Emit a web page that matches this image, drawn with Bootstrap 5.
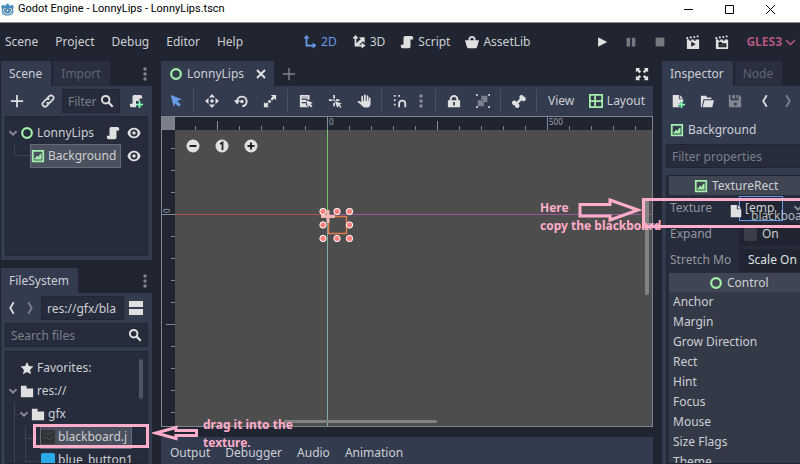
<!DOCTYPE html>
<html lang="en">
<head>
<meta charset="utf-8">
<meta name="viewport" content="width=device-width, initial-scale=1">
<title>Godot Engine - LonnyLips - LonnyLips.tscn</title>
<link href="https://cdn.jsdelivr.net/npm/bootstrap@5.3.0/dist/css/bootstrap.min.css" rel="stylesheet">
<style>
:root{--base:#202531;--panel:#333b4f;--inner:#262c3b;--txt:#cdcfd3;--dim:#7b808b;--pink:#ffaec9;--green:#a5efac}
html,body{height:100%}
body{background:var(--base);color:var(--txt);font:12px/16px "Noto Sans","Open Sans",sans-serif;overflow:hidden;position:relative}
svg.ic{width:14px;height:14px;flex:none;fill:#e0e0e0;display:block}
button{background:none;border:0;padding:0;color:inherit;display:inline-flex;align-items:center;justify-content:center;white-space:nowrap}
.titlebar{height:23px;background:#fff;color:#000;border-bottom:1px solid #8b8d92;padding:0 24px 4px 1px;font-size:11px;font-family:Roboto,"Open Sans",sans-serif}
.titlebar .wins{gap:30px}
.menubar{height:38px;padding:0 4px 0 5px}
.menus{gap:17px}.modes{gap:15px;margin-left:60px}.modes button{gap:4px}
.slot{width:29px;height:28px}
.slim{width:24px}
.blue{color:#699ce8}.blue svg.ic,svg.ic.blue{fill:#699ce8}
.pinkish{color:#b1567f;font-weight:700;gap:3px;margin-left:10px}
.workspace{gap:9px;padding-left:1px;min-height:0}
.dock-left{width:151px;min-height:0}.dock-right{width:138px;overflow:hidden;min-height:0}
.tabs{height:25px;flex:none}
.tabs button{height:25px;padding:0 9px 0 8px;background:var(--panel)}
.tabs button.off{background:#292f3f;color:#5f6571;margin-left:2px}
.tab-close{margin-left:12px}
.pane{background:var(--panel)}
.fill{flex:1 1 0;min-height:0}
.bar{height:30px}
.sunk{background:var(--inner);border:1px solid #202634}
.field{background:var(--inner);border:1px solid #202634;color:var(--txt);height:24px;padding:0 5px;width:100%;min-width:0;outline:0}
.field::placeholder{color:var(--dim);opacity:1}
.with-icon{position:relative}
.with-icon svg{position:absolute;right:6px;top:5px}
.scene-tree{height:140px;padding-top:4px}
.row-item{height:23px;display:flex;align-items:center;white-space:nowrap;gap:3px}
.sel{background:#4b505e;border:1px solid #646a77;height:24px;gap:3px}
.lvl1{padding-left:14px}.lvl2{padding-left:11px}.lvl3{padding-left:34px}.lvl4{padding-left:35px}
.eyes{margin-right:6px}
.files{padding-top:4px;overflow:hidden;position:relative}
.files .thumb{position:absolute;right:4px;top:7px;width:4px;height:40px;border-radius:2px;background:#4e5463}
.chev{width:14px;height:14px;margin-right:-3px}
.guide{position:absolute;left:0;top:0;fill:none;stroke:#3c4250}
.sep{width:1px;height:24px;background:#4a5164;margin:0 3px}
.viewport{border:1px solid #7f8493;height:311px;background:#4d4d4d;position:relative;overflow:hidden}
.viewport>svg{position:absolute;left:0;top:0;width:100%;height:100%}
.zoomers{position:absolute;left:24px;top:22px;gap:15px}
.bottom{height:27px;gap:15px;padding:4px 9px 0}
.search-props{width:160px;margin-bottom:7px;flex:none}
.insp{padding-left:2px;width:170px;overflow:hidden}
.node-name{height:28px;flex:none}
.head{background:#404553;height:19px}
.head.type{padding-left:25px}.head.ctrl{padding-left:40px}
.prop{height:26px;color:#9497a0}
.prop .name{width:70px;padding-left:1px;overflow:hidden;white-space:nowrap;flex:none}
.prop .name.short{width:64px;margin-right:6px}
.value{background:var(--base);height:23px;flex:1;color:var(--txt)}
.value select{appearance:none;background:none;border:0;color:#dfe0e2;height:23px;padding:0 9px;width:100%}
.value input{appearance:none;width:13px;height:13px;background:#3a3f49;border-radius:2px;margin:0 5px 0 5px}
.slotval{width:44px;height:25px;border:1px solid #699ce8;background:var(--base);justify-content:flex-start;padding-left:5px;margin-right:8px;color:var(--txt)}
.sections{background:#343947}
.sections button{display:flex;height:20px;padding-left:4px}
.note{position:absolute;color:var(--pink);font-weight:700;line-height:18px;white-space:nowrap}
.frame{position:absolute;border:3px solid var(--pink);pointer-events:none}
.arrow{position:absolute;fill:none;stroke:var(--pink);stroke-width:3}
.ghost{position:absolute;left:729px;top:204px;gap:8px;color:#b5b7bb}
.drag-src{left:33px;top:424px;width:116px;height:24px}
.drop-dst{left:642px;top:198px;right:-12px;height:30px}
.arrow-src{left:152px;top:424px}.arrow-dst{left:576px;top:196px}
.note-dst{left:540px;top:199px}.note-src{left:203px;top:416px}
</style>
<script src="https://cdn.jsdelivr.net/npm/bootstrap@5.3.0/dist/js/bootstrap.bundle.min.js"></script>
</head>
<body class="d-flex flex-column">
<svg width="0" height="0" class="position-absolute" aria-hidden="true"><defs>
<symbol id="dots" viewBox="0 0 16 16"><circle cx="8" cy="2.2" r="2"/><circle cx="8" cy="8" r="2"/><circle cx="8" cy="13.8" r="2"/></symbol>
<symbol id="script" viewBox="0 0 16 16"><path d="M6 1C4.900 1 4 1.900 4 3v8H1v2c0 1.100.9 2 2 2h7c1.100 0 2-.9 2-2V5h3V3c0-1.100-.9-2-2-2z"/></symbol>
<symbol id="plus" viewBox="0 0 16 16"><path d="M7 1h2v6h6v2H9v6H7V9H1V7h6z"/></symbol>
<symbol id="eye" viewBox="0 0 16 16"><path fill-rule="evenodd" d="M8 2C4.500 2 1.500 4.300 0.500 8c1 3.700 4 6 7.500 6s6.500-2.300 7.500-6C14.500 4.300 11.500 2 8 2zm0 2a4 4 0 110 8 4 4 0 010-8zm0 2a2 2 0 100 4 2 2 0 000-4z"/></symbol>
<symbol id="ring" viewBox="0 0 16 16"><circle cx="8" cy="8" r="5.500" fill="none" stroke="#a5efac" stroke-width="2.500"/></symbol>
<symbol id="tex" viewBox="0 0 16 16"><path fill="#a5efac" fill-rule="evenodd" d="M1 1h14v14H1zm2 2v10h10V3z"/><path fill="#a5efac" d="M4 12v-2h2V8h2v1h1V7h1V6h1V5h1v7z"/></symbol>
<symbol id="chev" viewBox="0 0 16 16"><path d="M4 6l4 4 4-4" fill="none" stroke="#858a94" stroke-width="2.200"/></symbol>
<symbol id="left" viewBox="0 0 16 16"><path d="M10 1.500L6 8l4 6.500" fill="none" stroke="#e0e0e0" stroke-width="2"/></symbol>
<symbol id="right" viewBox="0 0 16 16"><path d="M6 1.500L10 8l-4 6.500" fill="none" stroke="#7d828e" stroke-width="2"/></symbol>
<symbol id="search" viewBox="0 0 16 16"><circle cx="6.500" cy="6.500" r="4.300" fill="none" stroke="#e0e0e0" stroke-width="2.200"/><path d="M9.500 9.500L14.500 14.500" stroke="#e0e0e0" stroke-width="2.600"/></symbol>
<symbol id="folder" viewBox="0 0 16 16"><path d="M1 2h6.500v3H15v10H1z"/></symbol>
<symbol id="clap" viewBox="0 0 16 16"><path d="M0 3l2-1 1 2-2 1zM4 2l2-.6 1 2-2 .6zM8 1.500l2-.5 1 2-2 .5zM12 .8l2-.5.6 2-2 .6zM1 5h3v1.500h2V5h3v1.500h2V5h4v11H1z"/></symbol>
</defs></svg>

<header class="titlebar d-flex align-items-center flex-shrink-0">
<svg width="13" height="13" viewBox="0 0 16 16" class="me-1" aria-hidden="true"><path fill="#478cbf" d="M1 6l-.8-2L2.500 2l2 1.500L6 3l.5-2h3L10 3l1.500.5 2-1.500 2.300 2L15 6v6c0 2-3.500 3.500-7 3.500S1 14 1 12z"/><circle cx="4.500" cy="8.500" r="2" fill="#fff"/><circle cx="11.500" cy="8.500" r="2" fill="#fff"/><circle cx="4.800" cy="8.600" r="1.100" fill="#414042"/><circle cx="11.200" cy="8.600" r="1.100" fill="#414042"/><path stroke="#fff" d="M8 8v2.500M2 12l3 .5.500 1h5l.5-1 3-.5" fill="none"/></svg>
<span>Godot Engine - LonnyLips - LonnyLips.tscn</span>
<div class="wins d-flex ms-auto">
<button aria-label="Minimize"><svg width="11" height="11"><path d="M1 5.500h9" stroke="#000"/></svg></button>
<button aria-label="Maximize"><svg width="11" height="11"><path d="M1.500 1.500h8v8h-8z" fill="none" stroke="#000"/></svg></button>
<button aria-label="Close"><svg width="11" height="11"><path d="M1 1l9 9M10 1l-9 9" stroke="#000" fill="none"/></svg></button>
</div>
</header>

<nav class="menubar d-flex align-items-center flex-shrink-0">
<div class="menus d-flex"><button>Scene</button><button>Project</button><button>Debug</button><button>Editor</button><button>Help</button></div>
<div class="modes d-flex">
<button class="blue"><svg class="ic" viewBox="0 0 16 16"><path d="M4 0l3.500 4H5v7h6V8.500l4.500 3.500-4.500 3.500V13H3V4H.5z"/></svg>2D</button>
<button><svg class="ic" viewBox="0 0 16 16"><path d="M4 0l3.500 4H5v5.500l5-5L8 2.500h6.500V9l-2-2-4.500 4h3V8.500l4.500 3.500-4.500 3.500V13H3V4H.5z"/></svg>3D</button>
<button><svg class="ic"><use href="#script"/></svg>Script</button>
<button><svg class="ic" viewBox="0 0 16 16"><path fill-rule="evenodd" d="M8 1a4 4 0 00-4 4v1H0l2 7c.4 1.300 1 2 2 2h8c1 0 1.600-.7 2-2l2-7h-4V5a4 4 0 00-4-4zm0 2a2 2 0 012 2v1H6V5a2 2 0 012-2z"/></svg>AssetLib</button>
</div>
<div class="d-flex align-items-center ms-auto">
<button class="slot" aria-label="Play"><svg class="ic" viewBox="0 0 16 16"><path d="M3.500 2.500v11L14 8z"/></svg></button>
<button class="slot" aria-label="Pause"><svg class="ic" viewBox="0 0 16 16" opacity=".45"><path d="M3 3h4v10H3zM9 3h4v10H9z"/></svg></button>
<button class="slot me-1" aria-label="Stop"><svg class="ic" viewBox="0 0 16 16" opacity=".45"><path d="M3 3h10v10H3z"/></svg></button>
<button class="slot" aria-label="Play scene"><svg class="ic" viewBox="0 0 16 16"><use href="#clap"/><path fill="#202531" d="M6 7.500v6l5-3z"/></svg></button>
<button class="slot" aria-label="Play custom scene"><svg class="ic" viewBox="0 0 16 16"><use href="#clap"/><path fill="#202531" d="M4 8h4v1.500h5V14H4z"/><path fill="#e0e0e0" d="M6 11h5v1.500H6z" opacity=".2"/></svg></button>
<button class="pinkish">GLES3<svg width="11" height="11" viewBox="0 0 11 11"><path d="M1 3l4.500 4.500L10 3" fill="none" stroke="#b1567f" stroke-width="1.600"/></svg></button>
</div>
</nav>

<main class="workspace d-flex flex-grow-1">
<aside class="dock-left d-flex flex-column flex-shrink-0">
<div class="tabs d-flex align-items-center"><button>Scene</button><button class="off">Import</button><button class="ms-auto bg-transparent p-0" aria-label="Scene dock menu"><svg class="ic" opacity=".5"><use href="#dots"/></svg></button></div>
<section class="pane px-1 pb-1 mb-2">
<div class="bar d-flex align-items-center">
<button class="slot slim flex-shrink-0" aria-label="Add node"><svg class="ic"><use href="#plus"/></svg></button>
<button class="slot flex-shrink-0 ms-1" aria-label="Instance scene"><svg class="ic" viewBox="0 0 16 16"><g fill="none" stroke="#e0e0e0" stroke-width="1.900"><path d="M7 5l2.500-2.500a2.800 2.800 0 014 4L10.500 9.500a2.800 2.800 0 01-4 0M9 11l-2.500 2.500a2.800 2.800 0 01-4-4L5.500 6.500a2.800 2.800 0 014 0"/></g></svg></button>
<label class="with-icon flex-grow-1"><input class="field" placeholder="Filter" aria-label="Filter nodes"><svg class="ic"><use href="#search"/></svg></label>
<button class="slot slim flex-shrink-0 ms-1" aria-label="Attach script"><svg class="ic" viewBox="0 0 16 16"><use href="#script"/><path d="M8 8h8v8H8z" fill="#333b4f"/><path d="M11 8h2v3h3v2h-3v3h-2v-3H8v-2h3z" fill="#84ffb1"/></svg></button>
</div>
<div class="scene-tree sunk position-relative">
<svg class="guide" width="30" height="46"><path d="M8.500 28v10.500H25"/></svg>
<div class="row-item"><svg class="chev"><use href="#chev"/></svg><svg class="ic"><use href="#ring"/></svg><span class="flex-grow-1">LonnyLips</span><svg class="ic me-1"><use href="#script"/></svg><svg class="ic eyes"><use href="#eye"/></svg></div>
<div class="row-item position-relative"><div class="sel d-flex align-items-center ms-4 pe-1"><svg class="ic"><use href="#tex"/></svg><span>Background</span></div><svg class="ic ms-auto eyes"><use href="#eye"/></svg></div>
</div>
</section>
<div class="tabs d-flex align-items-center"><button>FileSystem</button><button class="ms-auto bg-transparent p-0" aria-label="FileSystem dock menu"><svg class="ic" opacity=".5"><use href="#dots"/></svg></button></div>
<section class="pane px-1 fill d-flex flex-column">
<div class="bar d-flex align-items-center flex-shrink-0">
<button aria-label="Back"><svg class="ic"><use href="#left"/></svg></button>
<button class="mx-1" aria-label="Forward"><svg class="ic"><use href="#right"/></svg></button>
<input class="field flex-grow-1" value="res://gfx/bla" aria-label="Path">
<button class="slot slim flex-shrink-0" aria-label="Split mode"><svg class="ic" viewBox="0 0 14 14"><path d="M0 0h14v6H0zM0 8h14v6H0z"/></svg></button>
</div>
<label class="with-icon mb-1"><input class="field" placeholder="Search files" aria-label="Search files"><svg class="ic"><use href="#search"/></svg></label>
<div class="files sunk fill">
<svg class="guide" width="40" height="115"><path d="M8.500 50v65M8.500 62.500H14M19.500 74v40M19.500 86.500H32M19.500 109.500H32"/></svg>
<div class="row-item lvl1"><svg class="ic" viewBox="0 0 16 16"><path d="M8 1l2.200 4.800 5.200.6-3.900 3.500 1.100 5.100L8 12.500 3.400 15l1.100-5.100L.6 6.400l5.200-.6z"/></svg><span>Favorites:</span></div>
<div class="row-item"><svg class="chev"><use href="#chev"/></svg><svg class="ic"><use href="#folder"/></svg><span>res://</span></div>
<div class="row-item lvl2"><svg class="chev"><use href="#chev"/></svg><svg class="ic"><use href="#folder"/></svg><span>gfx</span></div>
<div class="row-item lvl3"><div class="sel d-flex align-items-center pe-1"><svg class="ic" viewBox="0 0 14 14"><path d="M0 0h14v14H0z" fill="#303236"/><path d="M1 9l4-2 3 3 5-4M3 3l4 1 5-2" fill="none" stroke="#45484c"/></svg><span>blackboard.j</span></div></div>
<div class="row-item lvl4"><svg class="ic" viewBox="0 0 14 14"><rect width="14" height="14" rx="2" fill="#29abe8"/></svg><span>blue_button1</span></div>
<div class="thumb"></div>
</div>
</section>
</aside>

<section class="d-flex flex-column fill">
<div class="tabs d-flex align-items-center">
<button class="pe-2"><svg class="ic me-1"><use href="#ring"/></svg>LonnyLips<svg class="tab-close" width="10" height="10"><path d="M1 1l8 8M9 1l-8 8" stroke="#e0e0e0" stroke-width="2"/></svg></button>
<button class="bg-transparent" aria-label="New tab"><svg class="ic" viewBox="0 0 16 16" opacity=".5"><path d="M7.200 1h1.600v6.200H15v1.600H8.800V15H7.200V8.800H1V7.200h6.200z"/></svg></button>
<button class="ms-auto bg-transparent p-0 me-1" aria-label="Distraction free"><svg class="ic" viewBox="0 0 16 16"><path d="M1 1h5L4.500 2.500 7 5 5 7 2.500 4.500 1 6zM15 1v5l-1.500-1.500L11 7 9 5l2.500-2.500L10 1zM1 15v-5l1.500 1.500L5 9l2 2-2.500 2.500L6 15zM15 15h-5l1.500-1.500L9 11l2-2 2.500 2.500L15 10z"/></svg></button>
</div>
<div class="pane bar d-flex align-items-center flex-shrink-0">
<button class="slot" aria-label="Select"><svg class="ic blue" viewBox="0 0 16 16"><path d="M2 1l12.500 5-5 2 4 4-2.500 2.500-4-4-1.500 4.500z"/></svg></button><i class="sep"></i>
<button class="slot" aria-label="Move"><svg class="ic" viewBox="0 0 16 16"><path d="M8 0l3.500 4h-7zM8 16l3.500-4h-7zM0 8l4-3.500v7zM16 8l-4-3.500v7z"/><circle cx="8" cy="8" r="2"/></svg></button>
<button class="slot" aria-label="Rotate"><svg class="ic" viewBox="0 0 16 16"><path d="M3.500 9a5.500 5.500 0 116 5" fill="none" stroke="#e0e0e0" stroke-width="2.200"/><path d="M0 7h7l-3.500 5z"/><circle cx="9" cy="8.500" r="2"/></svg></button>
<button class="slot" aria-label="Scale"><svg class="ic" viewBox="0 0 16 16"><path d="M9 1h6v6l-2-2-2.500 2.500-2-2L11 3zM7 15H1V9l2 2 1.500-1.500 2 2L5 13z"/><circle cx="7.500" cy="8.500" r="1.700"/></svg></button><i class="sep"></i>
<button class="slot" aria-label="List selection"><svg class="ic" viewBox="0 0 16 16"><path fill-rule="evenodd" d="M1 1h11v6l-2-1H9V5H3v1.500h5V9H3v1.500h5V13h1l1 2H1zM3 3v.8h7V3z"/><path d="M8 7l8 3-3 1.300 2.500 2.500-1.500 1.500-2.500-2.500L10.500 16z"/></svg></button>
<button class="slot" aria-label="Pivot"><svg class="ic" viewBox="0 0 16 16"><path d="M6 1h2v4H6zM1 6h4v2H1zM9 6h4v2H9zM6 10h2v4H6z"/><circle cx="7" cy="7" r="1"/><path d="M8 8l8 3-3 1.300 2.500 2.500-1.200 1.200-2.500-2.500L10.500 16z"/></svg></button>
<button class="slot" aria-label="Pan"><svg class="ic" viewBox="0 0 16 16"><path d="M5 3a1 1 0 012 0v5h1V1.500a1 1 0 012 0V8h1V2.500a1 1 0 012 0V8h.5V5a1 1 0 012 0v6c0 3-2 4.500-5 4.500S6 14 5 12.500L1 9.500C0 8.500 1.500 7.500 2.500 8L5 9.500z"/></svg></button><i class="sep"></i>
<button class="slot" aria-label="Snap"><svg class="ic" viewBox="0 0 16 16"><path d="M1 1h2v2H1zM1 6h2v2H1zM1 11h2v2H1zM6 1h2v2H6z"/><path d="M7 15v-4a3.500 3.500 0 017 0v4" fill="none" stroke="#e0e0e0" stroke-width="2"/></svg></button>
<button aria-label="Snap options"><svg class="ic me-1" opacity=".5"><use href="#dots"/></svg></button><i class="sep"></i>
<button class="slot" aria-label="Lock"><svg class="ic" viewBox="0 0 16 16"><path fill-rule="evenodd" d="M8 1a5 5 0 00-5 5v1H1v8h14V7h-2V6a5 5 0 00-5-5zm0 2.300A2.700 2.700 0 0110.700 6v1H5.300V6A2.700 2.700 0 018 3.300zM7 9h2v4H7z"/></svg></button>
<button class="slot" aria-label="Group"><svg class="ic" viewBox="0 0 16 16"><path fill="#7c818d" d="M6 2h7v7h-4v5H2V7h4z"/><path d="M7 7h2v2H7z" fill="#333b4f"/><path d="M0 0h2v2H0zM14 0h2v2h-2zM0 14h2v2H0zM14 14h2v2h-2zM8 8h1v1H8z"/></svg></button><i class="sep"></i>
<button class="slot" aria-label="Skeleton"><svg class="ic" viewBox="0 0 16 16"><path d="M10.500 1A2.500 2.500 0 009 5L5 9a2.600 2.600 0 10-1.500 3.500A2.600 2.600 0 107 11l4-4a2.600 2.600 0 102-4A2.500 2.500 0 0010.500 1z"/></svg></button><i class="sep"></i>
<button class="px-2">View</button>
<button class="ms-auto me-1 pe-1"><svg class="ic me-1" viewBox="0 0 16 16"><path fill="#a5efac" fill-rule="evenodd" d="M0 0h16v16H0zm2 2v5h4V2zm6 0v5h6V2zM2 9v5h4V9zm6 0v5h6V9z"/></svg>Layout</button>
</div>
<div class="viewport flex-shrink-0">
<svg aria-label="2D canvas">
<defs>
<pattern id="tx" x="11" y="0" width="22" height="13" patternUnits="userSpaceOnUse"><path d="M.5 9v4" stroke="#7d8290"/></pattern>
<pattern id="ty" x="0" y="9" width="13" height="22" patternUnits="userSpaceOnUse"><path d="M9 .5h4" stroke="#7d8290"/></pattern>
</defs>
<rect width="100%" height="13" fill="#202531"/><rect width="13" height="100%" fill="#202531"/>
<rect width="100%" height="13" fill="url(#tx)"/><rect width="13" height="100%" fill="url(#ty)"/>
<rect width="13" height="13" fill="#7b7f8c"/>
<path d="M55.500 4v9M275.500 4v9M165.500 0v13M385.500 0v13M0 97.500h13M4 207.500h9" stroke="#858a98"/>
<g fill="#a5a8b0" font-size="8"><text x="167" y="8">0</text><text x="387" y="8">500</text><text transform="translate(8 96) rotate(-90)">0</text></g>
<path d="M13 97.500h152" stroke="#b05252"/><path d="M166 97.500h2000" stroke="#96589c"/>
<path d="M165.500 13v84" stroke="#78c070"/><path d="M165.500 98v2000" stroke="#7fb0a8"/>
<rect x="166.500" y="99.500" width="18" height="17" fill="none" stroke="#df7c50" stroke-width="1.500"/>
<path d="M166 93v13M159 99.500h14" stroke="#efb9b3" stroke-width="3"/>
<g fill="#ff7f7f" stroke="#fff" stroke-width="1"><circle cx="161" cy="94.500" r="3.200"/><circle cx="175" cy="94.500" r="3.200"/><circle cx="187.500" cy="94.500" r="3.200"/><circle cx="161" cy="108" r="3.200"/><circle cx="187.500" cy="108" r="3.200"/><circle cx="161" cy="121.500" r="3.200"/><circle cx="175" cy="121.500" r="3.200"/><circle cx="187.500" cy="121.500" r="3.200"/></g>
<rect x="122" y="303" width="153" height="3" rx="1.500" fill="#838383"/>
<rect x="483" y="82" width="4" height="96" rx="2" fill="#838383"/>
</svg>
<div class="zoomers d-flex">
<button aria-label="Zoom out"><svg class="ic" viewBox="0 0 14 14"><circle cx="7" cy="7" r="6.500"/><path d="M3.500 7h7" stroke="#222" stroke-width="2"/></svg></button>
<button aria-label="Zoom reset"><svg class="ic" viewBox="0 0 14 14"><circle cx="7" cy="7" r="6.500"/><path d="M5 5l2.500-1.500V11" fill="none" stroke="#222" stroke-width="1.800"/></svg></button>
<button aria-label="Zoom in"><svg class="ic" viewBox="0 0 14 14"><circle cx="7" cy="7" r="6.500"/><path d="M3.500 7h7M7 3.500v7" stroke="#222" stroke-width="2"/></svg></button>
</div>
</div>
<div class="pane bottom d-flex align-items-center mt-auto"><button>Output</button><button>Debugger</button><button>Audio</button><button>Animation</button></div>
</section>

<aside class="dock-right d-flex flex-column flex-shrink-0">
<div class="tabs d-flex"><button>Inspector</button><button class="off">Node</button></div>
<section class="pane fill d-flex flex-column ps-1">
<div class="bar d-flex align-items-center flex-shrink-0">
<button class="slot slim" aria-label="New resource"><svg class="ic" viewBox="0 0 16 16"><path d="M2 1h7v5h5v3h-3v2H8v3h2v1H2zM10 1l4 4h-4z"/><path d="M11 8h2v3h3v2h-3v3h-2v-3H8v-2h3z" fill="#84ffb1"/></svg></button>
<button class="slot ms-1" aria-label="Open"><svg class="ic" viewBox="0 0 16 16"><path d="M1 2h6l1 2h5v2H4L2.500 13 2 15H1z"/><path d="M5 7h11l-2 8H3z"/></svg></button>
<button class="slot me-1" aria-label="Save"><svg class="ic" viewBox="0 0 16 16" opacity=".45"><path fill-rule="evenodd" d="M1 1h2v6h9V1h1l2 2v12H1zm6 9v3h3v-3zM5 1h3v4H5zM9.500 1H11v4H9.500z"/></svg></button>
<button class="slot slim" aria-label="Previous"><svg class="ic"><use href="#left"/></svg></button>
<button class="slot slim" aria-label="Next"><svg class="ic"><use href="#right"/></svg></button>
</div>
<div class="node-name d-flex align-items-center ps-1"><svg class="ic me-1"><use href="#tex"/></svg>Background</div>
<input class="field search-props" placeholder="Filter properties" aria-label="Filter properties">
<div class="sunk insp fill">
<div class="head type d-flex align-items-center"><svg class="ic me-1"><use href="#tex"/></svg>TextureRect</div>
<div class="prop d-flex align-items-center"><span class="name">Texture</span><button class="slotval" aria-label="Texture: empty">[emp</button><svg class="ic"><use href="#chev"/></svg></div>
<div class="prop d-flex align-items-center"><label class="name" for="expand">Expand</label><div class="value d-flex align-items-center"><input type="checkbox" id="expand"><label for="expand">On</label></div></div>
<div class="prop d-flex align-items-center"><label class="name short" for="stretch">Stretch Mo</label><div class="value"><select id="stretch"><option>Scale On Expand</option></select></div></div>
<div class="head ctrl d-flex align-items-center"><svg class="ic me-1"><use href="#ring"/></svg>Control</div>
<div class="sections"><button>Anchor</button><button>Margin</button><button>Grow Direction</button><button>Rect</button><button>Hint</button><button>Focus</button><button>Mouse</button><button>Size Flags</button><button>Theme</button></div>
</div>
</section>
</aside>
</main>

<div class="ghost d-flex"><svg class="ic" viewBox="0 0 16 16"><path d="M2 1h7v5h5v9H2zM10 1l4 4h-4z"/></svg><span class="pt-1">blackboard</span></div>
<div class="frame drag-src"></div>
<div class="frame drop-dst"></div>
<svg class="arrow arrow-src" width="48" height="18"><path d="M4 9l20-5.500V6.500h20.500v5H24v3z"/></svg>
<svg class="arrow arrow-dst" width="68" height="30"><path d="M4 8.500h30V4l28 10-28 10v-4H4z"/></svg>
<div class="note note-dst">Here<br>copy the blackboard</div>
<div class="note note-src">drag it into the<br>texture.</div>
</body>
</html>
